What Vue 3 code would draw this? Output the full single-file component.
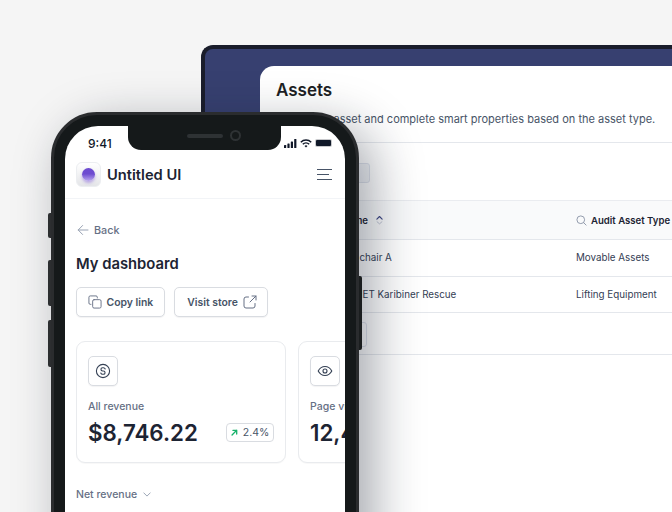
<template>
  <main class="page">
    <section class="laptop">
      <div class="panel">
        <header class="panel-head">
          <h2>Assets</h2>
          <p>Create an asset and complete smart properties based on the asset type.</p>
        </header>
        <div class="toolbar"><button class="ghost-btn"></button></div>
        <div class="table">
          <div class="row head">
            <div class="name-cell">
              <span>Asset Name</span>
              <svg width="7" height="12" viewBox="0 0 8 12" fill="none">
                <path d="M1 5l3-3 3 3" stroke="#3e4784" stroke-width="1.3" stroke-linecap="round" stroke-linejoin="round" />
                <path d="M1.2 8L4 10.4 6.8 8" stroke="#b5bccb" stroke-width="1" stroke-linecap="round" stroke-linejoin="round" />
              </svg>
            </div>
            <div class="type-cell">
              <svg width="11" height="11" viewBox="0 0 12 12" fill="none">
                <circle cx="5.2" cy="5.2" r="4.2" stroke="#8a94a6" stroke-width="1" />
                <path d="M8.4 8.4L11 11" stroke="#8a94a6" stroke-width="1" stroke-linecap="round" />
              </svg>
              <span>Audit Asset Type</span>
            </div>
          </div>
          <div class="row" v-for="asset in assets" :key="asset.name">
            <div class="name-cell body">{{ asset.name }}</div>
            <div class="type-cell">{{ asset.type }}</div>
          </div>
        </div>
        <div class="pager"><button class="ghost-btn small"></button></div>
      </div>
    </section>

    <section class="phone">
      <i class="side-btn mute"></i>
      <i class="side-btn up"></i>
      <i class="side-btn down"></i>
      <i class="side-btn power"></i>
      <div class="screen">
        <div class="notch">
          <span class="speaker"></span>
          <span class="camera"></span>
        </div>
        <div class="status">
          <span class="time">9:41</span>
          <div class="status-icons">
            <svg width="13" height="9" viewBox="0 0 13 9" fill="#101828">
              <rect x="0" y="6" width="2.2" height="3" rx=".6" />
              <rect x="3.4" y="4.4" width="2.2" height="4.6" rx=".6" />
              <rect x="6.8" y="2.4" width="2.2" height="6.6" rx=".6" />
              <rect x="10.2" y="0" width="2.2" height="9" rx=".6" />
            </svg>
            <svg width="12" height="9" viewBox="0 0 12 9" fill="none" stroke="#101828" stroke-width="1.5">
              <path d="M.8 3.2a7.4 7.4 0 0 1 10.4 0" />
              <path d="M2.8 5.2a4.6 4.6 0 0 1 6.4 0" />
              <path d="M6 8.6L4.5 7a2.1 2.1 0 0 1 3 0z" fill="#101828" stroke="none" />
            </svg>
            <span class="battery"><b></b></span>
          </div>
        </div>
        <nav class="topbar">
          <div class="brand">
            <span class="logo"><b></b></span>
            <span>Untitled UI</span>
          </div>
          <div class="burger"><i></i><i class="short"></i><i></i></div>
        </nav>
        <div class="content">
          <a class="back">
            <svg width="12" height="12" viewBox="0 0 12 12" fill="none">
              <path d="M11 6H1.2M5.6 1.5L1.2 6l4.4 4.5" stroke="#98a2b3" stroke-width="1" stroke-linecap="round" stroke-linejoin="round" />
            </svg>
            Back
          </a>
          <h1>My dashboard</h1>
          <div class="actions">
            <button class="btn">
              <svg width="14" height="14" viewBox="0 0 15 15" fill="none" stroke="#667085" stroke-width="1" stroke-linecap="round" stroke-linejoin="round">
                <path d="M3.2 10H2.4A1.4 1.4 0 0 1 1 8.6V2.4A1.4 1.4 0 0 1 2.4 1h6.2A1.4 1.4 0 0 1 10 2.4v.8" />
                <rect x="5" y="5" width="9" height="9" rx="1.5" />
              </svg>
              Copy link
            </button>
            <button class="btn visit">
              Visit store
              <svg width="14" height="14" viewBox="0 0 14 14" fill="none" stroke="#667085" stroke-width="1" stroke-linecap="round" stroke-linejoin="round">
                <path d="M13 5V1H9M13 1L7 7M5.5 2H3a2 2 0 0 0-2 2v7a2 2 0 0 0 2 2h7a2 2 0 0 0 2-2V8.5" />
              </svg>
            </button>
          </div>
          <div class="cards">
            <article class="card">
              <span class="icon-box">
                <svg width="16" height="16" viewBox="0 0 16 16" fill="none" stroke="#344054" stroke-width="1.1" stroke-linecap="round">
                  <circle cx="8" cy="8" r="6.6" />
                  <path d="M10.2 6a1.9 1.9 0 0 0-1.9-1.3H7.6a1.6 1.6 0 0 0 0 3.3h.8a1.6 1.6 0 0 1 0 3.3h-.7A1.9 1.9 0 0 1 5.8 10" />
                </svg>
              </span>
              <p class="label">All revenue</p>
              <div class="value-row">
                <strong>$8,746.22</strong>
                <span class="badge">
                  <svg width="7" height="7" viewBox="0 0 8 8" fill="none" stroke="#17b26a" stroke-width="1.5" stroke-linecap="round" stroke-linejoin="round">
                    <path d="M1.2 6.8L6.5 1.5M2.2 1.5h4.3v4.3" />
                  </svg>
                  2.4%
                </span>
              </div>
            </article>
            <article class="card">
              <span class="icon-box">
                <svg width="16" height="16" viewBox="0 0 16 16" fill="none" stroke="#344054" stroke-width="1.1" stroke-linejoin="round">
                  <path d="M1.2 8S3.6 3.5 8 3.5 14.8 8 14.8 8 12.4 12.5 8 12.5 1.2 8 1.2 8z" />
                  <circle cx="8" cy="8" r="2" />
                </svg>
              </span>
              <p class="label">Page views</p>
              <div class="value-row">
                <strong>12,462</strong>
              </div>
            </article>
          </div>
          <div class="net">
            Net revenue
            <svg width="8" height="5" viewBox="0 0 10 6" fill="none">
              <path d="M1 1l4 4 4-4" stroke="#98a2b3" stroke-width="1.2" stroke-linecap="round" stroke-linejoin="round" />
            </svg>
          </div>
        </div>
      </div>
    </section>
  </main>
</template>

<script setup>
const assets = [
  { name: 'Task chair A', type: 'Movable Assets' },
  { name: 'HELMET Karibiner Rescue', type: 'Lifting Equipment' }
]
</script>

<style>
html, body {
  margin: 0;
  background: #f5f5f5;
}
</style>

<style scoped>
* {
  box-sizing: border-box;
}

.page {
  position: relative;
  width: 672px;
  height: 512px;
  overflow: hidden;
  background: #f5f5f5;
  font-family: Inter, "Liberation Sans", sans-serif;
  color: #101828;
}

.laptop {
  position: absolute;
  left: 201px;
  top: 45px;
  width: 520px;
  height: 520px;
  padding: 21px 0 0 59px;
  background: #374070;
  border: 4px solid #1a1d2b;
  border-right: none;
  border-bottom: none;
  border-top-left-radius: 12px;
}

.panel {
  height: 100%;
  margin: -4px 0 0 -4px;
  background: #fff;
  border-top-left-radius: 14px;
}

.panel-head {
  height: 77px;
  padding: 14px 16px 0;
  border-bottom: 1px solid #e4e7ec;
}

.panel-head h2 {
  margin: 0;
  font-size: 17px;
  line-height: 20px;
  font-weight: 600;
  color: #1d1f24;
}

.panel-head p {
  margin: 11px 0 0;
  padding-left: 4px;
  font-size: 11px;
  line-height: 16px;
  color: #475467;
  white-space: nowrap;
}

.toolbar {
  height: 57px;
  padding: 20px 0 0 30px;
}

.ghost-btn {
  display: block;
  width: 80px;
  height: 20px;
  background: #f2f4f7;
  border: 1px solid #dfe3ec;
  border-radius: 3px;
}

.ghost-btn.small {
  width: 77px;
  height: 25px;
  background: #fff;
}

.row {
  display: grid;
  grid-template-columns: 316px 1fr;
  height: 36.5px;
  align-items: center;
  border-bottom: 1px solid #e4e7ec;
  font-size: 9.8px;
  color: #344054;
}

.row.head {
  height: 40px;
  background: #f9fafb;
  border-top: 1px solid #eaecf0;
  font-size: 9.6px;
  font-weight: 600;
  color: #1d2433;
}

.name-cell {
  display: flex;
  align-items: center;
  gap: 8px;
  padding-left: 52px;
  white-space: nowrap;
}

.name-cell.body {
  padding-left: 75px;
}

.type-cell {
  display: flex;
  align-items: center;
  gap: 4px;
  white-space: nowrap;
}

.pager {
  height: 42px;
  padding: 9px 0 0 30px;
  border-bottom: 1px solid #e4e7ec;
}

.phone {
  position: absolute;
  left: 51px;
  top: 112px;
  width: 308px;
  height: 620px;
  padding: 14px;
  background: #15191a;
  border: 3px solid #2a2c2e;
  border-radius: 46px;
  box-shadow: 14px 14px 50px rgba(16, 24, 40, 0.38);
}

.side-btn {
  position: absolute;
  width: 3px;
  background: #2c2e30;
}

.mute { left: -6px; top: 98px; height: 25px; border-radius: 2px 0 0 2px; }
.up { left: -6px; top: 145px; height: 46px; border-radius: 2px 0 0 2px; }
.down { left: -6px; top: 205px; height: 47px; border-radius: 2px 0 0 2px; }
.power { right: -6px; top: 161px; height: 74px; background: #1b1e1f; border-radius: 0 2px 2px 0; }

.screen {
  position: relative;
  height: 100%;
  margin: -3px;
  background: #fff;
  border-radius: 33px;
  overflow: hidden;
}

.notch {
  position: absolute;
  left: 63px;
  top: 0;
  width: 153px;
  height: 24px;
  background: #15191a;
  border-radius: 0 0 13px 13px;
}

.speaker {
  position: absolute;
  left: 59px;
  top: 8px;
  width: 36px;
  height: 4px;
  background: #2e3234;
  border-radius: 2px;
}

.camera {
  position: absolute;
  left: 102px;
  top: 4px;
  width: 11px;
  height: 11px;
  background: #15191a;
  border: 2px solid #2e3234;
  border-radius: 50%;
}

.status {
  display: flex;
  justify-content: space-between;
  align-items: center;
  height: 34px;
  padding: 0 13px 0 23px;
}

.time {
  font-size: 12px;
  font-weight: 500;
}

.status-icons {
  display: flex;
  align-items: center;
  gap: 3px;
}

.battery {
  display: block;
  width: 17px;
  height: 8px;
  padding: 1px;
  border-radius: 2px;
  background: #c8c9cc;
}

.battery b {
  display: block;
  height: 100%;
  background: #101828;
  border-radius: 1px;
}

.topbar {
  display: flex;
  justify-content: space-between;
  align-items: center;
  height: 42px;
  margin-top: -3px;
  padding: 0 13px 6px 11px;
  border-bottom: 1px solid #f2f4f7;
}

.brand {
  display: flex;
  align-items: center;
  gap: 6px;
  font-size: 14.7px;
  font-weight: 600;
  color: #1d2433;
}

.logo {
  display: flex;
  align-items: center;
  justify-content: center;
  width: 25px;
  height: 25px;
  background: linear-gradient(#fff, #e4e5e8);
  border: 1px solid #eceef1;
  border-radius: 6px;
}

.logo b {
  width: 13px;
  height: 13px;
  border-radius: 50%;
  background: linear-gradient(#6d4bd0 45%, #b9a6ee);
  box-shadow: 0 2px 3px rgba(127, 86, 217, 0.45);
}

.burger {
  display: flex;
  flex-direction: column;
  gap: 4px;
  width: 15px;
}

.burger i {
  display: block;
  height: 1px;
  background: #475467;
}

.burger i.short {
  width: 12px;
}

.content {
  padding: 24px 0 0 11px;
}

.back {
  display: flex;
  align-items: center;
  gap: 5px;
  padding-left: 1px;
  height: 14px;
  font-size: 10.8px;
  font-weight: 500;
  color: #667085;
}

h1 {
  margin: 15px 0 0;
  font-size: 14.8px;
  line-height: 24px;
  font-weight: 600;
  color: #1d2433;
}

.actions {
  display: flex;
  gap: 9px;
  margin-top: 11px;
}

.btn {
  display: flex;
  align-items: center;
  gap: 5px;
  height: 30px;
  padding: 0 10.5px;
  background: #fff;
  border: 1px solid #d9dce1;
  border-radius: 5px;
  box-shadow: 0 1px 1px rgba(16, 24, 40, 0.05);
  font-family: inherit;
  font-size: 10.4px;
  font-weight: 600;
  color: #475467;
}

.btn.visit {
  padding-left: 12.5px;
}

.cards {
  display: flex;
  gap: 12px;
  margin-top: 24px;
}

.card {
  flex: none;
  width: 210px;
  height: 122px;
  padding: 14px 11px 0 11px;
  background: #fff;
  border: 1px solid #e9ebee;
  border-radius: 9px;
  box-shadow: 0 1px 1px rgba(16, 24, 40, 0.03);
}

.icon-box {
  display: flex;
  align-items: center;
  justify-content: center;
  width: 30px;
  height: 30px;
  background: #fff;
  border: 1px solid #d9dce1;
  border-radius: 5px;
  box-shadow: 0 1px 1px rgba(16, 24, 40, 0.05);
}

.label {
  margin: 14px 0 0;
  font-size: 10.5px;
  line-height: 14px;
  font-weight: 500;
  color: #667085;
  white-space: nowrap;
}

.value-row {
  display: flex;
  justify-content: space-between;
  align-items: center;
  margin-top: 3px;
  height: 30px;
}

.value-row strong {
  font-size: 22.3px;
  font-weight: 600;
  color: #1d2433;
}

.badge {
  display: flex;
  align-items: center;
  justify-content: center;
  gap: 5px;
  width: 48px;
  height: 19px;
  background: #fff;
  border: 1px solid #d9dce1;
  border-radius: 4px;
  font-size: 10.5px;
  font-weight: 400;
  color: #475467;
}

.net {
  display: flex;
  align-items: center;
  gap: 6px;
  margin-top: 25px;
  font-size: 10.5px;
  font-weight: 500;
  color: #667085;
}
</style>
